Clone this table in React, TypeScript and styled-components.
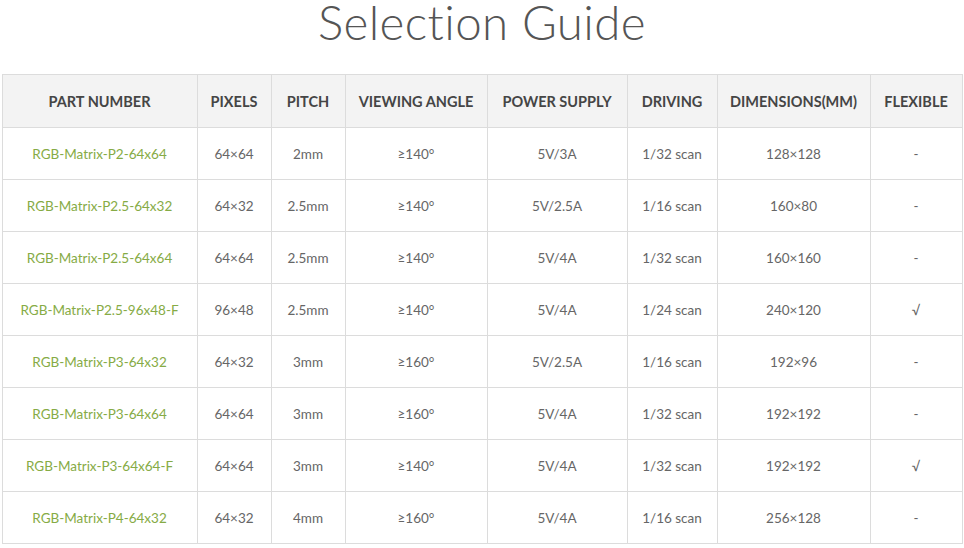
import React from "react";
import styled, { createGlobalStyle } from "styled-components";

const Global = createGlobalStyle`
  html, body { margin: 0; padding: 0; background: #fff; }
  body { font-family: Lato, "Noto Sans", sans-serif; }
`;

const Page = styled.div`
  width: 964px;
  height: 548px;
  overflow: hidden;
  display: flex;
  flex-direction: column;
  align-items: center;
`;

const Title = styled.h1`
  margin: 0;
  height: 74px;
  font-family: Lato, "Noto Sans", sans-serif;
  font-weight: 300;
  font-size: 47.5px;
  line-height: 43px;
  color: #555;
  letter-spacing: 0.4px;
`;

const Table = styled.table`
  width: 960px;
  border-collapse: collapse;
  table-layout: fixed;
`;

const Head = styled.th`
  height: 52px;
  padding: 0;
  background: #f3f3f3;
  border: 1px solid #dcdcdc;
  font-size: 14.5px;
  font-weight: 700;
  color: #454545;
  text-align: center;
  text-transform: uppercase;
`;

const Cell = styled.td<{ $part?: boolean }>`
  height: 51px;
  padding: 0;
  border: 1px solid #dcdcdc;
  font-size: 13.5px;
  color: ${(p) => (p.$part ? "#86ab45" : "#666")};
  text-align: center;
`;

const cols = [195, 74, 74, 142, 140, 90, 153, 92];
const heads = [
  "Part Number",
  "Pixels",
  "Pitch",
  "Viewing Angle",
  "Power Supply",
  "Driving",
  "Dimensions(mm)",
  "Flexible",
];

const rows: string[][] = [
  ["RGB-Matrix-P2-64x64", "64×64", "2mm", "≥140°", "5V/3A", "1/32 scan", "128×128", "-"],
  ["RGB-Matrix-P2.5-64x32", "64×32", "2.5mm", "≥140°", "5V/2.5A", "1/16 scan", "160×80", "-"],
  ["RGB-Matrix-P2.5-64x64", "64×64", "2.5mm", "≥140°", "5V/4A", "1/32 scan", "160×160", "-"],
  ["RGB-Matrix-P2.5-96x48-F", "96×48", "2.5mm", "≥140°", "5V/4A", "1/24 scan", "240×120", "√"],
  ["RGB-Matrix-P3-64x32", "64×32", "3mm", "≥160°", "5V/2.5A", "1/16 scan", "192×96", "-"],
  ["RGB-Matrix-P3-64x64", "64×64", "3mm", "≥160°", "5V/4A", "1/32 scan", "192×192", "-"],
  ["RGB-Matrix-P3-64x64-F", "64×64", "3mm", "≥140°", "5V/4A", "1/32 scan", "192×192", "√"],
  ["RGB-Matrix-P4-64x32", "64×32", "4mm", "≥160°", "5V/4A", "1/16 scan", "256×128", "-"],
];

export default function App() {
  return (
    <Page>
      <Global />
      <Title>Selection Guide</Title>
      <Table>
        <colgroup>
          {cols.map((w, i) => (
            <col key={i} style={{ width: w }} />
          ))}
        </colgroup>
        <thead>
          <tr>
            {heads.map((h) => (
              <Head key={h}>{h}</Head>
            ))}
          </tr>
        </thead>
        <tbody>
          {rows.map((r) => (
            <tr key={r[0]}>
              {r.map((c, i) => (
                <Cell key={i} $part={i === 0}>
                  {c}
                </Cell>
              ))}
            </tr>
          ))}
        </tbody>
      </Table>
    </Page>
  );
}
